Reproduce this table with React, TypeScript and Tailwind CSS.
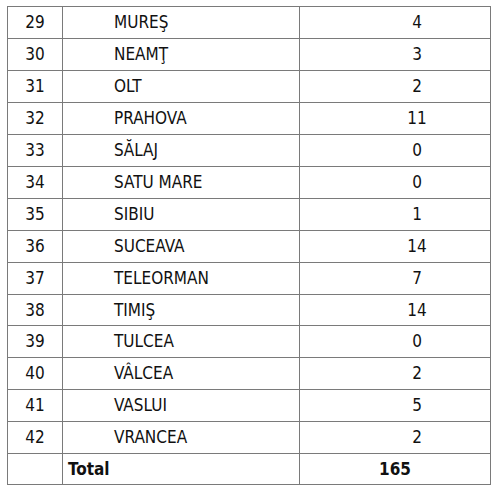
const rows: [string, string, string][] = [
  ['29', 'MUREŞ', '4'],
  ['30', 'NEAMŢ', '3'],
  ['31', 'OLT', '2'],
  ['32', 'PRAHOVA', '11'],
  ['33', 'SĂLAJ', '0'],
  ['34', 'SATU MARE', '0'],
  ['35', 'SIBIU', '1'],
  ['36', 'SUCEAVA', '14'],
  ['37', 'TELEORMAN', '7'],
  ['38', 'TIMIŞ', '14'],
  ['39', 'TULCEA', '0'],
  ['40', 'VÂLCEA', '2'],
  ['41', 'VASLUI', '5'],
  ['42', 'VRANCEA', '2'],
];

export default function App() {
  return (
    <div className="w-[497px] h-[490px] bg-white pt-[6px] pl-[7px] text-[17px] leading-none text-[#111] [font-family:'DejaVu_Sans_Condensed','DejaVu_Sans',sans-serif]">
      <div className="w-[484px] border border-[#7a7a7a]">
        {rows.map(([nr, name, count], i) => (
          <div
            key={nr}
            className={`grid grid-cols-[54px_237px_1fr] ${i === 0 ? 'h-[31px]' : i === 9 ? 'h-[31px] border-t border-[#7a7a7a]' : 'h-[32px] border-t border-[#7a7a7a]'}`}
          >
            <div className="flex items-center justify-center">{nr}</div>
            <div className="flex items-center border-l border-[#7a7a7a] pl-[51px]">{name}</div>
            <div className="flex items-center justify-center border-l border-[#7a7a7a] pl-[44px]">{count}</div>
          </div>
        ))}
        <div className="grid h-[31px] grid-cols-[54px_237px_1fr] border-t border-[#7a7a7a] font-bold">
          <div />
          <div className="flex items-center border-l border-[#7a7a7a] pl-[5px]">Total</div>
          <div className="flex items-center justify-center border-l border-[#7a7a7a]">165</div>
        </div>
      </div>
    </div>
  );
}
